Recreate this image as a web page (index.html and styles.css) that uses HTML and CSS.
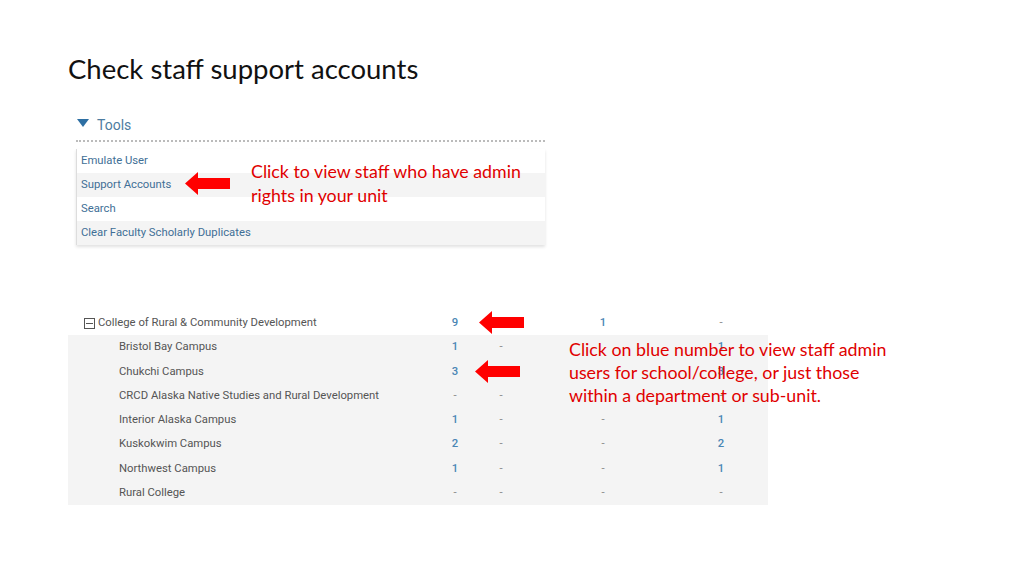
FILE: index.html
```html
<!DOCTYPE html>
<html lang="en">
<head>
    <meta charset="UTF-8">
    <title>Check staff support accounts</title>
    <link rel="stylesheet" href="styles.css">
</head>
<body>
    <div class="slide">
        <h1>Check staff support accounts</h1>

        <!-- Tools menu -->
        <div class="tools">
            <div class="tools-header">
                <span class="caret"></span>
                <span>Tools</span>
            </div>
            <ul class="tools-menu">
                <li>Emulate User</li>
                <li>Support Accounts</li>
                <li>Search</li>
                <li>Clear Faculty Scholarly Duplicates</li>
            </ul>
        </div>

        <!-- Unit table -->
        <div class="units">
            <div class="row parent">
                <div class="name"><span class="toggle"></span>College of Rural &amp; Community Development</div>
                <div class="num link">9</div>
                <div class="num"></div>
                <div class="num link">1</div>
                <div class="num">-</div>
            </div>
            <div class="children">
                <div class="row">
                    <div class="name">Bristol Bay Campus</div>
                    <div class="num link">1</div>
                    <div class="num">-</div>
                    <div class="num"></div>
                    <div class="num link">1</div>
                </div>
                <div class="row">
                    <div class="name">Chukchi Campus</div>
                    <div class="num link">3</div>
                    <div class="num"></div>
                    <div class="num"></div>
                    <div class="num link">3</div>
                </div>
                <div class="row">
                    <div class="name">CRCD Alaska Native Studies and Rural Development</div>
                    <div class="num">-</div>
                    <div class="num">-</div>
                    <div class="num"></div>
                    <div class="num">-</div>
                </div>
                <div class="row">
                    <div class="name">Interior Alaska Campus</div>
                    <div class="num link">1</div>
                    <div class="num">-</div>
                    <div class="num">-</div>
                    <div class="num link">1</div>
                </div>
                <div class="row">
                    <div class="name">Kuskokwim Campus</div>
                    <div class="num link">2</div>
                    <div class="num">-</div>
                    <div class="num">-</div>
                    <div class="num link">2</div>
                </div>
                <div class="row">
                    <div class="name">Northwest Campus</div>
                    <div class="num link">1</div>
                    <div class="num">-</div>
                    <div class="num">-</div>
                    <div class="num link">1</div>
                </div>
                <div class="row">
                    <div class="name">Rural College</div>
                    <div class="num">-</div>
                    <div class="num">-</div>
                    <div class="num">-</div>
                    <div class="num">-</div>
                </div>
            </div>
        </div>

        <!-- Annotations -->
        <svg class="arrow arrow-menu" viewBox="0 0 45 23"><polygon points="0,11.5 13,0 13,6 45,6 45,17 13,17 13,23"/></svg>
        <p class="note note-menu">Click to view staff who have admin<br>rights in your unit</p>

        <svg class="arrow arrow-college" viewBox="0 0 45 23"><polygon points="0,11.5 13,0 13,6 45,6 45,17 13,17 13,23"/></svg>
        <svg class="arrow arrow-campus" viewBox="0 0 45 23"><polygon points="0,11.5 13,0 13,6 45,6 45,17 13,17 13,23"/></svg>
        <p class="note note-table">Click on blue number to view staff admin<br>users for school/college, or just those<br>within a department or sub-unit.</p>
    </div>
</body>
</html>
```

FILE: styles.css
```css
:root {
    --link-color: #3f6f96;
    --num-color: #4a86b4;
    --text-color: #555;
    --row-bg: #f4f4f4;
    --note-red: #e00000;
}

body {
    margin: 0;
    background: #fff;
}

.slide {
    position: relative;
    width: 1024px;
    height: 576px;
    padding: 52px 0 0 68px;
    box-sizing: border-box;
    overflow: hidden;
}

h1 {
    margin: 0;
    font-family: Lato, "Open Sans", sans-serif;
    font-weight: 400;
    font-size: 27.5px;
    line-height: 34px;
    color: #111;
}

/* Tools menu */
.tools {
    width: 469px;
    margin: 27px 0 0 8px;
    font-family: Roboto, "Noto Sans", sans-serif;
}

.tools-header {
    display: flex;
    align-items: center;
    gap: 8px;
    height: 24px;
    padding-left: 1px;
    font-size: 14px;
    color: #4d7ca0;
    border-bottom: 2px dotted #bbb;
    padding-bottom: 3px;
}

.caret {
    width: 0;
    height: 0;
    border-left: 6px solid transparent;
    border-right: 6px solid transparent;
    border-top: 8px solid #2d6fa3;
    margin-top: -4px;
}

.tools-menu {
    list-style: none;
    margin: 7px 0 0;
    padding: 0;
    border-left: 1px solid #ddd;
    box-shadow: 0 2px 3px rgba(0, 0, 0, 0.12);
}

.tools-menu li {
    height: 24px;
    line-height: 24px;
    padding-left: 4px;
    font-size: 11.3px;
    color: var(--link-color);
}

.tools-menu li:nth-child(even) {
    background: var(--row-bg);
}

/* Unit table */
.units {
    width: 700px;
    margin-top: 66px;
    font-family: Roboto, "Noto Sans", sans-serif;
    font-size: 11.3px;
    color: var(--text-color);
}

.row {
    display: grid;
    grid-template-columns: 372px 30px 62px 142px 94px;
    height: 24.3px;
    line-height: 24px;
}

.children {
    background: var(--row-bg);
}

.name {
    padding-left: 51px;
    white-space: nowrap;
}

.parent .name {
    padding-left: 16px;
    display: flex;
    align-items: center;
}

.toggle {
    position: relative;
    width: 9px;
    height: 9px;
    border: 1px solid #555;
    margin-right: 3px;
}

.toggle::after {
    content: "";
    position: absolute;
    left: 1px;
    right: 1px;
    top: 4px;
    height: 1px;
    background: #555;
}

.num {
    text-align: center;
    color: #888;
}

.num.link {
    color: var(--num-color);
    font-weight: 500;
}

/* Annotations */
.arrow {
    position: absolute;
    width: 45px;
    height: 23px;
    fill: #ff0000;
}

.arrow-menu {
    left: 185px;
    top: 172px;
}

.arrow-college {
    left: 479px;
    top: 311px;
}

.arrow-campus {
    left: 475px;
    top: 360px;
}

.note {
    position: absolute;
    margin: 0;
    font-family: Lato, "Open Sans", sans-serif;
    font-size: 17.8px;
    color: var(--note-red);
}

.note-menu {
    left: 251px;
    top: 159px;
    line-height: 24px;
}

.note-table {
    left: 569px;
    top: 338px;
    line-height: 23px;
}
```
